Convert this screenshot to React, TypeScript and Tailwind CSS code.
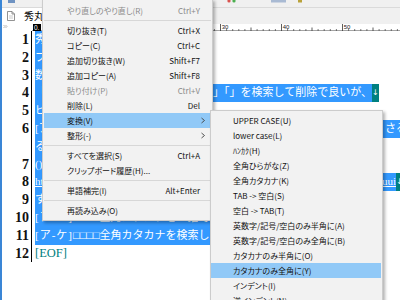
import React from 'react';

type MenuItem =
  | { sep: true }
  | { sep?: false; label: string; shortcut?: string; disabled?: boolean; sub?: boolean; active?: boolean };

const mainItems: MenuItem[] = [
  { label: 'やり直しのやり直し(R)', shortcut: 'Ctrl+Y', disabled: true },
  { sep: true },
  { label: '切り抜き(T)', shortcut: 'Ctrl+X' },
  { label: 'コピー(C)', shortcut: 'Ctrl+C' },
  { label: '追加切り抜き(W)', shortcut: 'Shift+F7' },
  { label: '追加コピー(A)', shortcut: 'Shift+F8' },
  { label: '貼り付け(P)', shortcut: 'Ctrl+V', disabled: true },
  { label: '削除(L)', shortcut: 'Del' },
  { label: '変換(V)', sub: true, active: true },
  { label: '整形(-)', sub: true },
  { sep: true },
  { label: 'すべてを選択(S)', shortcut: 'Ctrl+A' },
  { label: 'クリップボード履歴(H)...' },
  { sep: true },
  { label: '単語補完(I)', shortcut: 'Alt+Enter' },
  { sep: true },
  { label: '再読み込み(O)' },
];

const subItems = [
  'UPPER CASE(U)',
  'lower case(L)',
  'ﾊﾝｶｸ(H)',
  '全角ひらがな(Z)',
  '全角カタカナ(K)',
  'TAB -> 空白(S)',
  '空白 -> TAB(T)',
  '英数字/記号/空白のみ半角に(A)',
  '英数字/記号/空白のみ全角に(B)',
  'カタカナのみ半角に(O)',
  'カタカナのみ全角に(Y)',
  'インデント(I)',
  '逆インデント(N)',
  'ブロック整形(F)',
];

const menuText = "font-['Noto_Sans_CJK_JP',sans-serif] [font-feature-settings:'palt'] text-[8px] leading-none";

function Newline() {
  return (
    <span className="shrink-0 w-[7px] bg-[#008080] text-white flex items-center justify-center font-['DejaVu_Sans',sans-serif] text-[8px]">
      ↓
    </span>
  );
}

function Sel({ children }: { children: React.ReactNode }) {
  return <span className="shrink-0 bg-[#3399ff] text-white flex items-center">{children}</span>;
}

function Row({ n, children }: { n?: string; children?: React.ReactNode }) {
  return (
    <div className="flex h-[17.8px] shrink-0 whitespace-nowrap overflow-hidden">
      <div className="w-[30px] shrink-0 border-r border-black pr-[2px] text-right font-['Liberation_Serif',serif] font-bold text-[14px] leading-[17.8px] text-[#111]">
        {n}
      </div>
      <div className="flex pl-[3px] font-['Liberation_Serif','Noto_Sans_CJK_JP',serif] text-[11px] leading-[17.8px]">
        {children}
      </div>
    </div>
  );
}

function Ruler() {
  const ticks = [];
  for (let c = 0; c <= 60; c++) {
    const x = 5.5 + c * 6.1;
    if (c % 10 === 0) {
      ticks.push(<line key={c} x1={x} y1={0} x2={x} y2={7} stroke="#333" strokeWidth={0.8} />);
      if (c > 0 && c < 60)
        ticks.push(
          <text key={'t' + c} x={x + 1.2} y={5} fontSize={6} fontFamily="Liberation Sans, sans-serif" fill="#222">
            {c}
          </text>
        );
    } else if (c % 5 === 0) {
      ticks.push(<line key={c} x1={x} y1={3.5} x2={x} y2={7} stroke="#333" strokeWidth={0.8} />);
    } else {
      ticks.push(<line key={c} x1={x} y1={5} x2={x} y2={7} stroke="#444" strokeWidth={0.7} />);
    }
  }
  return (
    <svg width="368" height="7" className="block">
      <line x1={0} y1={6.6} x2={368} y2={6.6} stroke="#555" strokeWidth={0.6} />
      {ticks}
      <rect x={1} y={0} width={8} height={7} fill="#000" />
      <text x={2} y={6} fontSize={6.5} fontFamily="Liberation Sans, sans-serif" fill="#fff">
        0.
      </text>
    </svg>
  );
}

function ContextMenu() {
  return (
    <div className={`absolute left-[42px] top-[-1px] w-[171px] bg-[#f2f2f2] border border-[#cccccc] pt-[3px] pb-[2px] shadow-[2px_2px_3px_rgba(0,0,0,0.3)] ${menuText}`}>
      {mainItems.map((it, i) =>
        it.sep ? (
          <div key={i} className="h-[5px] flex items-center mx-[1px]">
            <div className="h-px w-full bg-[#d7d7d7]" />
          </div>
        ) : (
          <div
            key={i}
            className={`h-[15px] mx-[1px] flex items-center pl-[23px] pr-[4px] ${it.active ? 'bg-[#91c9f7]' : ''} ${it.disabled ? 'text-[#8a8a8a]' : 'text-[#111]'}`}
          >
            <span className="flex-1">{it.label}</span>
            {it.shortcut && <span className="mr-[7px] [font-feature-settings:normal]">{it.shortcut}</span>}
            {it.sub && (
              <svg width="7" height="7" className="shrink-0">
                <path d="M1.5 1 L4.5 3.5 L1.5 6" fill="none" stroke="#444" strokeWidth={0.9} />
              </svg>
            )}
          </div>
        )
      )}
    </div>
  );
}

function SubMenu() {
  return (
    <div className={`absolute left-[210px] top-[110px] w-[173px] bg-[#f2f2f2] border border-[#cccccc] pt-[2px] shadow-[2px_2px_3px_rgba(0,0,0,0.3)] ${menuText}`}>
      {subItems.map((s, i) => (
        <div key={s} className={`h-[15px] mr-[1px] flex items-center pl-[22px] text-[#111] ${i === 10 ? 'bg-[#91c9f7]' : ''}`}>
          {s}
        </div>
      ))}
    </div>
  );
}

export default function App() {
  return (
    <div className="relative w-[400px] h-[300px] overflow-hidden bg-white flex">
      <div className="w-[2px] shrink-0 bg-[#3a86d6]" />
      <div className="flex-1 min-w-0 flex flex-col">
        {/* toolbar (icons cut off at top) */}
        <div className="h-[8px] shrink-0 bg-[#f0f0f0] border-b border-[#dadada]">
          <svg width="398" height="7" className="block">
            <rect x={6} y={0} width={7} height={3} fill="#6f93c2" />
            <circle cx={227} cy={1} r={1.6} fill="#d9534f" />
            <circle cx={232} cy={1} r={1.6} fill="#4caf50" />
            <rect x={269} y={0} width={15} height={2.5} fill="#a9bad3" />
            <rect x={296} y={0} width={4} height={2.5} fill="#b9a23a" />
          </svg>
        </div>

        {/* tab bar */}
        <div className="h-[16px] shrink-0 bg-[#f0f0f0] flex items-end">
          <div className="h-[16px] w-[44px] bg-white border-r border-[#d0d0d0] flex items-center gap-[3px] pl-[5px]">
            <svg width="8" height="10" className="shrink-0">
              <path d="M0.5 0.5 H5 L7.5 3 V9.5 H0.5 Z" fill="#fff" stroke="#777" strokeWidth={0.8} />
              <path d="M5 0.5 V3 H7.5" fill="none" stroke="#777" strokeWidth={0.8} />
              <path d="M2 5 H6 M2 7 H6" stroke="#aaa" strokeWidth={0.6} />
            </svg>
            <span className="ml-[6px] font-['Noto_Sans_CJK_JP',sans-serif] text-[10px] leading-none text-black">秀丸</span>
          </div>
        </div>

        {/* ruler */}
        <div className="h-[7px] shrink-0 flex bg-white">
          <div className="w-[30px] shrink-0 pl-[1px]">
            <svg width="6" height="6" className="block">
              <path d="M0.5 1 L2 2.5 L0.5 4 M2.5 1 L4 2.5 L2.5 4" fill="none" stroke="#999" strokeWidth={0.7} />
            </svg>
          </div>
          <Ruler />
        </div>

        {/* text area */}
        <div className="flex flex-col">
          <Row n="1">
            <Sel>秀丸エディタの正規表現メモ<Newline /></Sel>
          </Row>
          <Row n="2">
            <Sel>プログラム中の全角カタカナ<Newline /></Sel>
          </Row>
          <Row n="3">
            <Sel>数が多いと目で探すのは大変<Newline /></Sel>
          </Row>
          <Row n="4">
            <Sel>
              <span className="shrink-0 w-[178px] overflow-hidden">「検索」で正規表現にチェックを入れて「</span>
              <span className="shrink-0">」「」を検索して削除で良いが、</span>
              <Newline />
            </Sel>
          </Row>
          <Row n="5">
            <Sel>ピンポイントで置換する場合<Newline /></Sel>
          </Row>
          <Row n="6">
            <Sel>
              <span className="shrink-0 w-[350px] overflow-hidden">[ア-ン]と書けば大半のカタカナは拾えるが、長音符などは別扱いとな</span>
              <span className="shrink-0">さる</span>
            </Sel>
          </Row>
          <Row>
            <Sel>るので注意が必要<Newline /></Sel>
          </Row>
          <Row n="7">
            <Sel>()で囲むとグループとして扱える<Newline /></Sel>
          </Row>
          <Row n="8">
            <Sel>
              <span className="shrink-0 w-[347px] overflow-hidden underline">http://hide.maruo.co.jp/software/hidemaru/regexp.html?id=uui</span>
              <span className="shrink-0 underline">uui</span>
              <Newline />
            </Sel>
          </Row>
          <Row n="9">
            <Sel>すべてを選択してから変換すれば一括で処理できる<Newline /></Sel>
          </Row>
          <Row n="10">
            <Sel><span className="tracking-[1px]">[ア-ン]</span>□□□□全角カタカナを一括で変換する<Newline /></Sel>
          </Row>
          <Row n="11">
            <Sel><span className="tracking-[1px]">[ア-ケ]</span>□□□□全角カタカナを検索して置換<Newline /></Sel>
          </Row>
          <Row n="12">
            <span className="text-[#008080] text-[12.5px]">[EOF]</span>
          </Row>
        </div>
      </div>

      <ContextMenu />
      <SubMenu />
    </div>
  );
}
